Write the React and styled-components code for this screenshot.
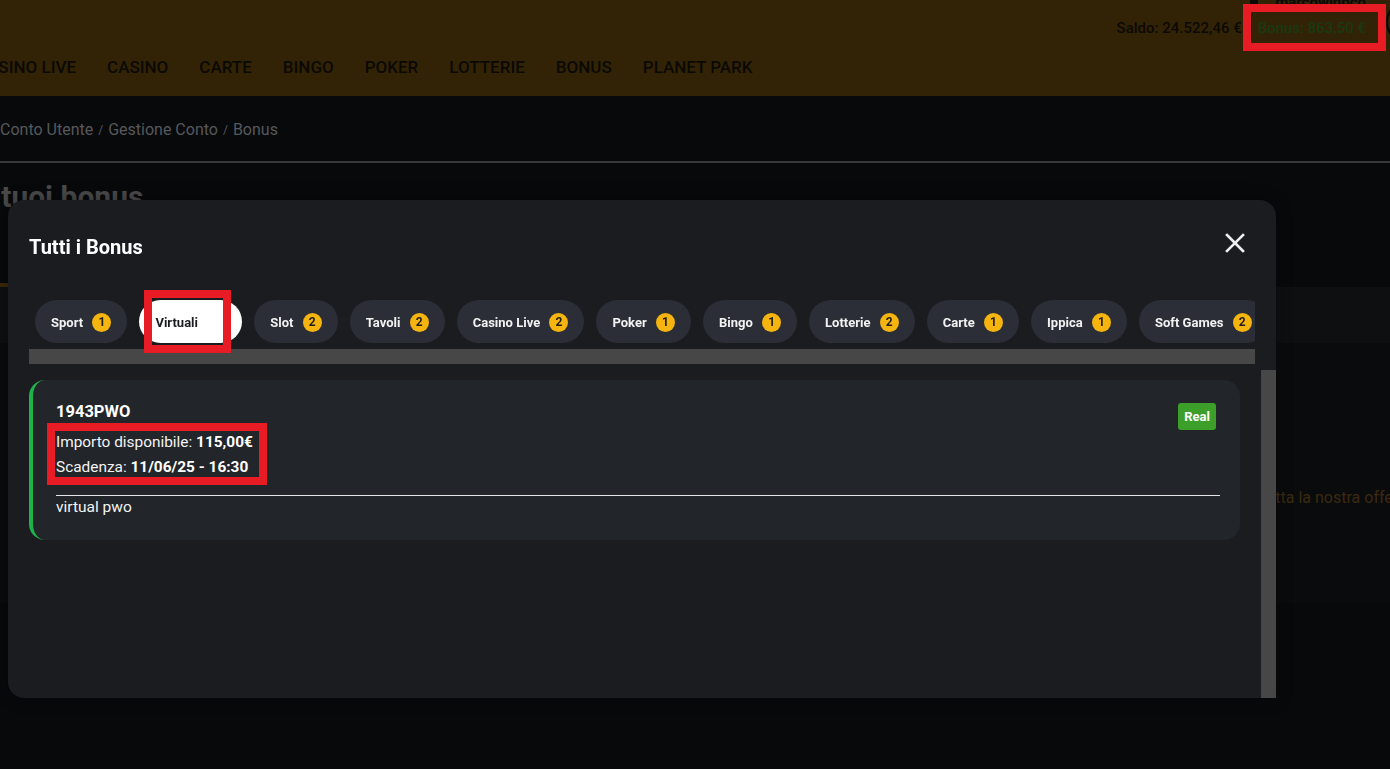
import React from "react";
import styled, { createGlobalStyle } from "styled-components";

const GlobalStyle = createGlobalStyle`
    html, body {
        margin: 0;
        padding: 0;
        overflow: hidden;
        background: #08090b;
        font-family: Roboto, "Liberation Sans", Arial, sans-serif;
    }
    * { box-sizing: border-box; }
`;

const Page = styled.div`
    width: 1390px;
    height: 769px;
    background: #08090b;
    overflow: hidden;
`;

const Header = styled.header`
    height: 96px;
    background: #332306;
    display: flex;
    flex-direction: column;
`;

const TopBar = styled.div`
    display: flex;
    justify-content: flex-end;
    align-items: flex-start;
`;

const Account = styled.div`
    display: flex;
    flex-direction: column;
    align-items: flex-end;
    padding-right: 16px;
`;

const UserRow = styled.div`
    display: flex;
    align-items: center;
    gap: 17px;
    margin-top: -6px;
    height: 16px;
    font-size: 15px;
    font-weight: 700;
    color: #0b0904;
    position: relative;
    z-index: 5;
    padding-right: 4px;
`;

const UserIcon = styled.span`
    width: 8px;
    height: 10px;
    background: #0b0904;
    border-radius: 1px;
`;

const BalanceRow = styled.div`
    display: flex;
    align-items: center;
    height: 27px;
    margin-top: 4px;
    font-size: 15px;
    font-weight: 500;
`;

const Saldo = styled.span`
    color: #0b0904;
`;

const Divider = styled.span`
    width: 2px;
    height: 27px;
    background: #0b0904;
    margin: 0 6px 0 8px;
`;

const BonusAmount = styled.span`
    color: #183912;
    padding-right: 4px;
`;

const RoundButton = styled.div`
    width: 44px;
    height: 44px;
    margin-right: -40px;
    border: 2px solid #0b0904;
    border-radius: 50%;
    flex-shrink: 0;
`;

const Nav = styled.nav`
    display: flex;
    gap: 31px;
    margin-left: -24px;
    margin-top: 13px;
`;

const NavItem = styled.span`
    font-size: 17px;
    font-weight: 500;
    color: #0b0904;
    text-transform: uppercase;
`;

const Breadcrumb = styled.div`
    display: flex;
    align-items: center;
    gap: 5px;
    padding: 22px 0 19px 0;
    line-height: 24px;
    font-size: 16px;
    color: #56585b;
    border-bottom: 2px solid #383838;
`;

const Slash = styled.span`
    font-size: 12px;
`;

const PageTitle = styled.h1`
    margin: 16px 0 0 -15px;
    font-size: 30px;
    line-height: 36px;
    font-weight: 700;
    color: #4a4a4b;
`;

const BgTabBar = styled.div`
    margin-top: 68px;
    display: flex;
    border-top: 4px solid #08090b;
    background: #0e0f11;
    height: 60px;
`;

const BgTab = styled.div`
    width: 220px;
    margin-top: -4px;
    border-top: 4px solid #3a2906;
`;

const BgPanel = styled.div`
    height: 260px;
    background: #0a0b0d;
    display: flex;
    align-items: center;
    padding-top: 48px;
`;

const BgText = styled.p`
    margin: 0 0 0 1212px;
    white-space: nowrap;
    font-size: 16px;
    color: #3a2a0f;
`;

/* modal */

const Overlay = styled.div`
    position: fixed;
    inset: 0;
    display: flex;
    align-items: flex-start;
    padding: 200px 0 0 8px;
    z-index: 10;
`;

const Modal = styled.div`
    width: 1268px;
    height: 498px;
    background: #1a1c20;
    border-radius: 16px 16px 0 16px;
    display: flex;
    flex-direction: column;
    box-shadow: 0 0 16px rgba(0, 0, 0, 0.35);
`;

const ModalHeader = styled.div`
    display: flex;
    justify-content: space-between;
    align-items: center;
    padding: 35px 31px 0 21px;
`;

const ModalTitle = styled.h2`
    margin: 0;
    font-size: 20px;
    line-height: 24px;
    font-weight: 700;
    color: #ffffff;
`;

const CloseButton = styled.button`
    border: 0;
    padding: 0;
    background: transparent;
    display: flex;
    margin-top: -8px;
    cursor: pointer;
`;

const TabsArea = styled.div`
    margin: 41px 21px 0 21px;
    display: flex;
    flex-direction: column;
`;

const TabsRow = styled.div`
    display: flex;
    gap: 12px;
    padding: 0 0 6px 6px;
    overflow: hidden;
`;

const Tab = styled.button`
    flex-shrink: 0;
    display: flex;
    align-items: center;
    gap: 9.3px;
    height: 43px;
    padding: 1px 16px 0 16px;
    border: 0;
    border-radius: 22px;
    background: ${(p) => (p.$active ? "#ffffff" : "#2b2e36")};
    color: ${(p) => (p.$active ? "#1a1c20" : "#f2f2f2")};
    font-family: Roboto, "Liberation Sans", Arial, sans-serif;
    font-size: 13px;
    font-weight: 700;
`;

const Count = styled.span`
    width: 19px;
    height: 19px;
    border-radius: 50%;
    display: flex;
    align-items: center;
    justify-content: center;
    background: ${(p) => (p.$active ? "#ffffff" : "#f6b40f")};
    color: ${(p) => (p.$active ? "#ffffff" : "#1d1d1d")};
    font-size: 12px;
    font-weight: 700;
`;

const HTrack = styled.div`
    height: 15px;
    background: #474747;
`;

const Body = styled.div`
    flex: 1;
    display: flex;
    margin-top: 6px;
    min-height: 0;
`;

const BodyContent = styled.div`
    flex: 1;
    padding: 10px 21px 0 21px;
`;

const VTrack = styled.div`
    width: 15px;
    background: #474747;
`;

const Card = styled.div`
    background: #222529;
    border-radius: 16px;
    border-left: 4px solid #1eb24c;
    padding: 22px 20px 23px 23px;
    color: #ffffff;
`;

const CardTop = styled.div`
    display: flex;
    justify-content: space-between;
    align-items: flex-start;
`;

const CardCode = styled.div`
    font-size: 16.5px;
    line-height: 20px;
    font-weight: 700;
    margin-bottom: 8px;
`;

const InfoLine = styled.div`
    font-size: 15.4px;
    line-height: 25px;
    color: #f4f4f4;

    b {
        font-weight: 700;
        color: #ffffff;
    }
`;

const RealBadge = styled.span`
    margin: 1px 4px 0 0;
    padding: 0 6px;
    height: 27px;
    display: flex;
    align-items: center;
    background: #3c9f2a;
    border-radius: 3px;
    font-size: 13px;
    font-weight: 700;
    color: #ffffff;
`;

const Rule = styled.hr`
    margin: 15px 0 1px 0;
    border: 0;
    height: 1px;
    background: #e6e6e6;
`;

const Description = styled.div`
    font-size: 15.5px;
    line-height: 20px;
    color: #f4f4f4;
`;

/* red annotation boxes */
const Mark = styled.div`
    position: fixed;
    border: 8px solid #e71c24;
    pointer-events: none;
    z-index: 20;
`;

const tabs = [
    { label: "Sport", count: 1 },
    { label: "Virtuali", count: 1, active: true },
    { label: "Slot", count: 2 },
    { label: "Tavoli", count: 2 },
    { label: "Casino Live", count: 2 },
    { label: "Poker", count: 1 },
    { label: "Bingo", count: 1 },
    { label: "Lotterie", count: 2 },
    { label: "Carte", count: 1 },
    { label: "Ippica", count: 1 },
    { label: "Soft Games", count: 2 },
];

const navItems = ["Casino Live", "Casino", "Carte", "Bingo", "Poker", "Lotterie", "Bonus", "Planet Park"];

function CloseIcon() {
    return (
        <svg width="20" height="20" viewBox="0 0 20 20">
            <path d="M2 2 L18 18 M18 2 L2 18" stroke="#efefef" strokeWidth="2.6" strokeLinecap="square" fill="none" />
        </svg>
    );
}

function App() {
    return (
        <>
            <GlobalStyle />
            <Page>
                <Header>
                    <TopBar>
                        <Account>
                            <UserRow>
                                <UserIcon />
                                marcowinbco
                            </UserRow>
                            <BalanceRow>
                                <Saldo>Saldo: 24.522,46 €</Saldo>
                                <Divider />
                                <BonusAmount>Bonus: 863,50 €</BonusAmount>
                            </BalanceRow>
                        </Account>
                        <RoundButton />
                    </TopBar>
                    <Nav>
                        {navItems.map((n) => (
                            <NavItem key={n}>{n}</NavItem>
                        ))}
                    </Nav>
                </Header>
                <Breadcrumb>
                    <span>Conto Utente</span>
                    <Slash>/</Slash>
                    <span>Gestione Conto</span>
                    <Slash>/</Slash>
                    <span>Bonus</span>
                </Breadcrumb>
                <PageTitle>I tuoi bonus</PageTitle>
                <BgTabBar>
                    <BgTab />
                </BgTabBar>
                <BgPanel>
                    <BgText>Scopri tutta la nostra offerta</BgText>
                </BgPanel>
            </Page>

            <Overlay>
                <Modal>
                    <ModalHeader>
                        <ModalTitle>Tutti i Bonus</ModalTitle>
                        <CloseButton aria-label="Chiudi">
                            <CloseIcon />
                        </CloseButton>
                    </ModalHeader>
                    <TabsArea>
                        <TabsRow>
                            {tabs.map((t) => (
                                <Tab key={t.label} $active={t.active}>
                                    {t.label}
                                    <Count $active={t.active}>{t.count}</Count>
                                </Tab>
                            ))}
                        </TabsRow>
                        <HTrack />
                    </TabsArea>
                    <Body>
                        <BodyContent>
                            <Card>
                                <CardTop>
                                    <div>
                                        <CardCode>1943PWO</CardCode>
                                        <InfoLine>
                                            Importo disponibile: <b>115,00€</b>
                                        </InfoLine>
                                        <InfoLine>
                                            Scadenza: <b>11/06/25 - 16:30</b>
                                        </InfoLine>
                                    </div>
                                    <RealBadge>Real</RealBadge>
                                </CardTop>
                                <Rule />
                                <Description>virtual pwo</Description>
                            </Card>
                        </BodyContent>
                        <VTrack />
                    </Body>
                </Modal>
            </Overlay>

            <Mark style={{ left: 1243, top: 4, width: 143, height: 47 }} />
            <Mark style={{ left: 144, top: 290, width: 87, height: 63 }} />
            <Mark style={{ left: 47, top: 423, width: 220, height: 62 }} />
        </>
    );
}

export default App;
